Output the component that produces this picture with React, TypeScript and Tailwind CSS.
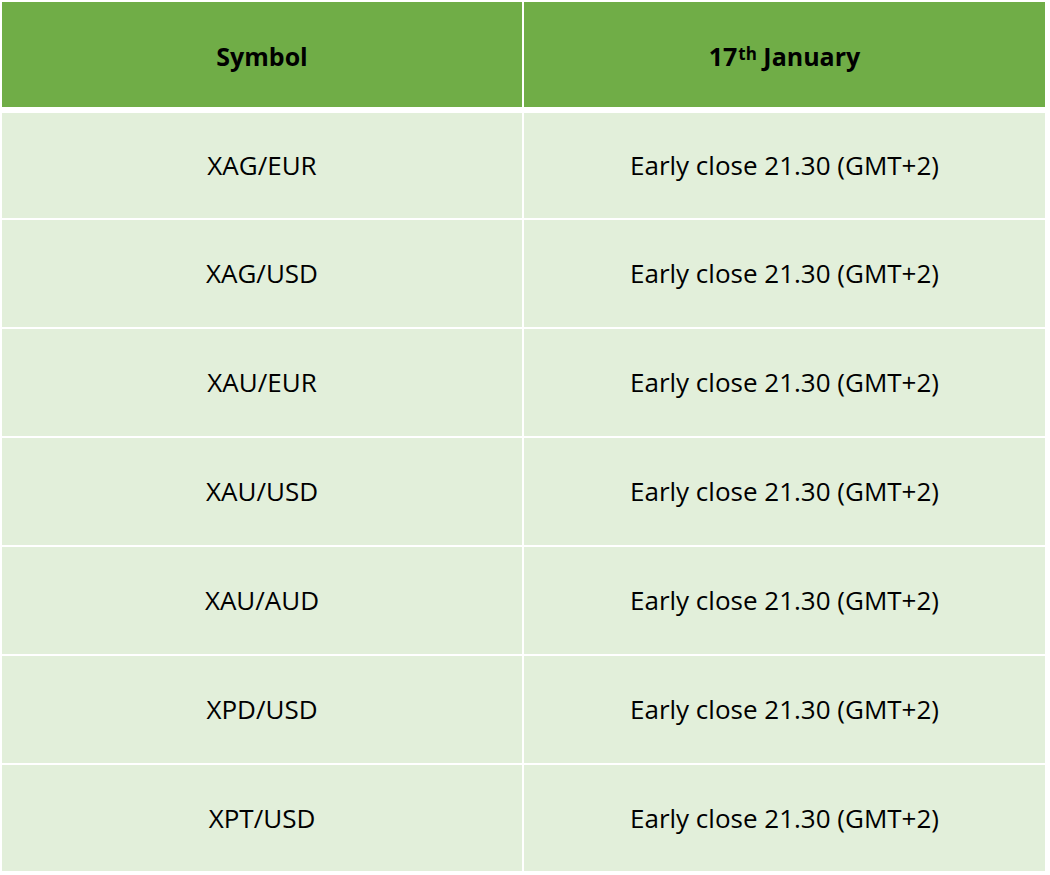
import React from "react";

const symbols = ["XAG/EUR", "XAG/USD", "XAU/EUR", "XAU/USD", "XAU/AUD", "XPD/USD", "XPT/USD"];

export default function App() {
  return (
    <div className="w-[1050px] h-[875px] bg-white pt-[2px] pl-[2px]" style={{ fontFamily: '"Open Sans", "Noto Sans", sans-serif' }}>
      <div className="flex flex-col w-[1043px]">
        <div className="grid grid-cols-[520px_521px] gap-x-[2px] h-[105px] mb-[6px]">
          <div className="bg-[#70ad47] flex items-center justify-center pt-[4px] text-[25px] font-bold text-black">Symbol</div>
          <div className="bg-[#70ad47] flex items-center justify-center pt-[4px] text-[25px] font-bold text-black">
            <span>
              17<sup className="text-[17px] relative -top-[6px] ml-[1px]">th</sup> January
            </span>
          </div>
        </div>
        <div className="flex flex-col gap-y-[2px]">
          {symbols.map((s, i) => (
            <div key={s} className={`grid grid-cols-[520px_521px] gap-x-[2px] ${i === 0 ? "h-[105px]" : i === 6 ? "h-[106px]" : "h-[107px]"}`}>
              <div className="bg-[#e2efda] flex items-center justify-center text-[26px] text-black">{s}</div>
              <div className="bg-[#e2efda] flex items-center justify-center text-[26px] text-black">Early close 21.30 (GMT+2)</div>
            </div>
          ))}
        </div>
      </div>
    </div>
  );
}
